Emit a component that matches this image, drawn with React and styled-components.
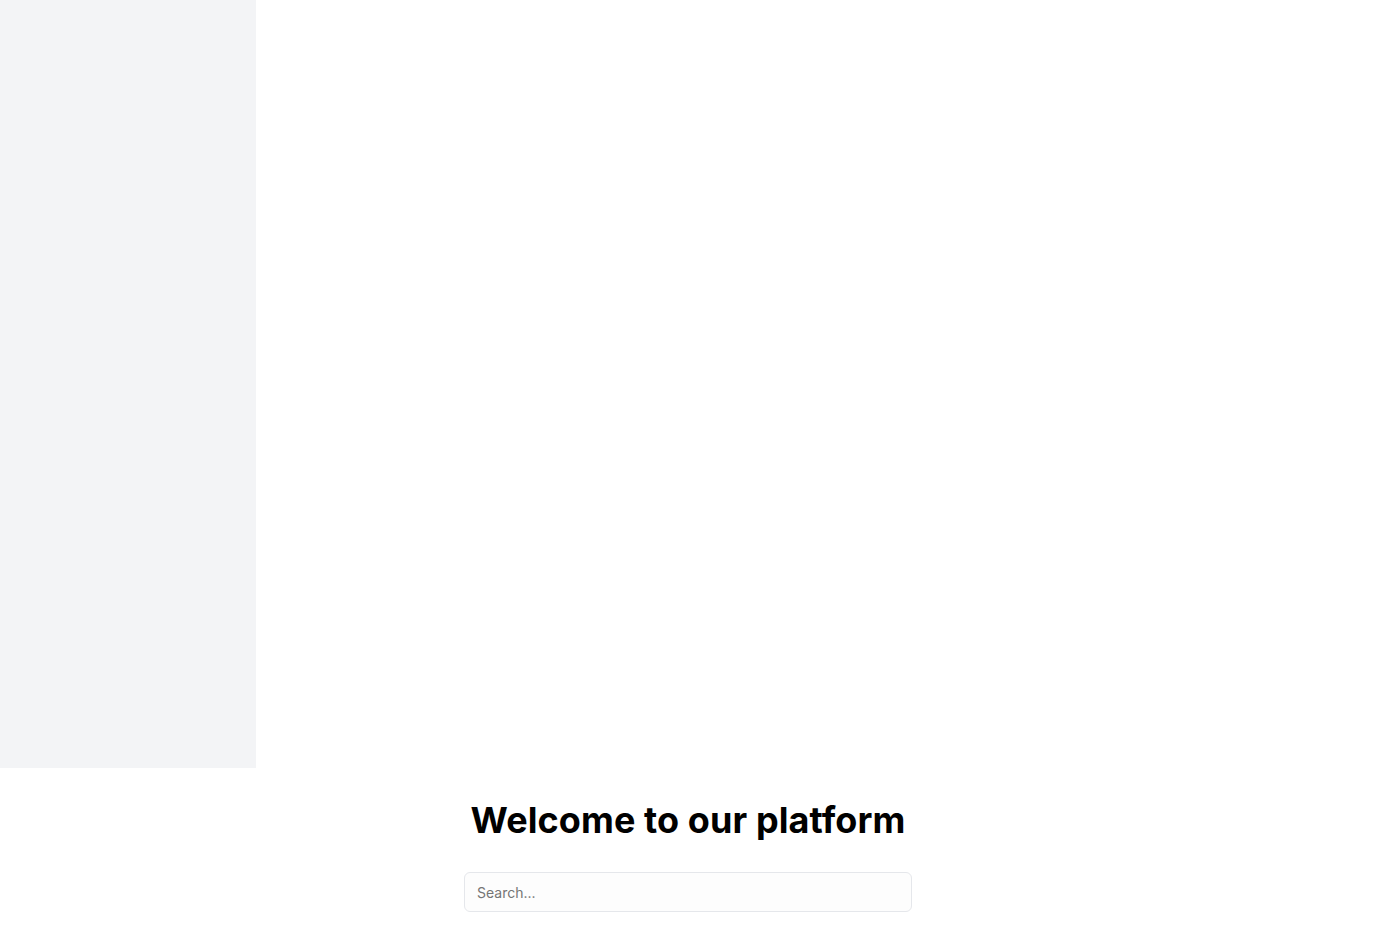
import styled, { createGlobalStyle } from "styled-components";

const GlobalStyle = createGlobalStyle`
  * { box-sizing: border-box; }
  body {
    margin: 0;
    font-family: Inter, "Noto Sans", sans-serif;
    background: #ffffff;
    color: #000;
  }
`;

export default function App() {
  return (
    <>
      <GlobalStyle />
      <Layout>
        <Sidebar />
        <Main />
      </Layout>
      <Hero>
        <Title>Welcome to our platform</Title>
        <SearchInput type="text" placeholder="Search..." />
      </Hero>
    </>
  );
}

const Layout = styled.div`
  display: flex;
  height: 768px;
`;

const Sidebar = styled.aside`
  width: 256px;
  background: #f3f4f6;
`;

const Main = styled.main`
  flex: 1;
  background: #ffffff;
`;

const Hero = styled.section`
  display: flex;
  flex-direction: column;
  align-items: center;
  padding: 32px 16px;
`;

const Title = styled.h1`
  margin: 0 0 32px 0;
  font-size: 36px;
  line-height: 40px;
  font-weight: 700;
  letter-spacing: 0.1px;
  color: #000;
`;

const SearchInput = styled.input`
  width: 448px;
  height: 40px;
  padding: 0 12px;
  border: 1px solid #e5e7eb;
  border-radius: 6px;
  background: #fdfdfd;
  font-family: Inter, "Noto Sans", sans-serif;
  font-size: 14px;
  color: #111827;
  outline: none;
  &::placeholder {
    color: #757575;
  }
`;
